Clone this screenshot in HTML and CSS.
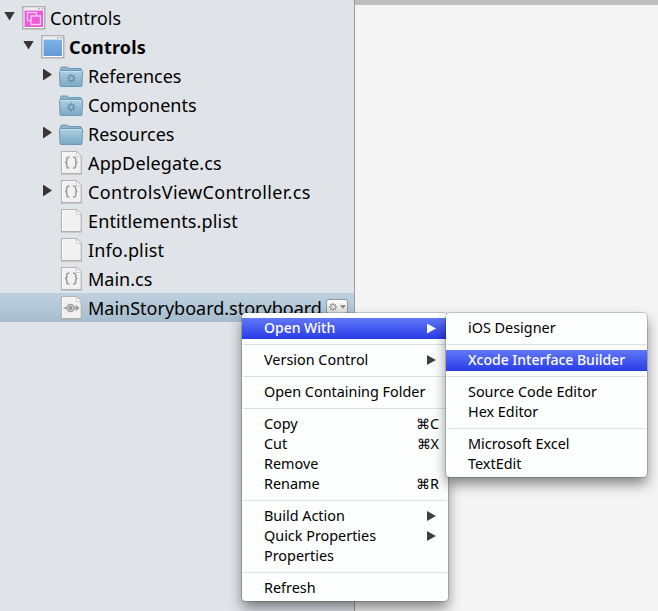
FILE: index.html
```html
<!DOCTYPE html>
<html lang="en">
<head>
<meta charset="utf-8">
<title>Controls</title>
<link rel="stylesheet" href="styles.css">
</head>
<body>
<svg class="defs" width="0" height="0" aria-hidden="true">
  <defs>
    <linearGradient id="folderFill" x1="0" y1="0" x2="0" y2="1"><stop offset="0" stop-color="#afd0e2"/><stop offset="1" stop-color="#7aa9c6"/></linearGradient>
    <linearGradient id="blueFill" x1="0" y1="0" x2="0" y2="1"><stop offset="0" stop-color="#7cb3e8"/><stop offset="1" stop-color="#629bd5"/></linearGradient>
    <symbol id="folder" viewBox="0 0 26 24">
      <path d="M2.5 7V4.5Q2.5 3 4 3H8.500Q10 3 10.300 4.500H22Q23.500 4.500 23.500 6V9H2.500Z" fill="#8cb4cc" stroke="#6d9ab5"/>
      <path d="M1.500 7.500Q1.500 6.500 2.500 6.500H23.500Q24.500 6.500 24.500 7.500L24 21.500Q24 22.500 23 22.500H3Q2 22.500 2 21.500Z" fill="url(#folderFill)" stroke="#6c9ab6"/>
      <path d="M2.500 7.500H23.500" stroke="#c6e1ed"/>
    </symbol>
    <symbol id="gear" viewBox="0 0 12 12">
      <g fill="none" stroke="currentColor"><circle cx="6" cy="6" r="2.800" stroke-width="1.200"/><path d="M6 .8V3M6 9V11.200M.8 6H3M9 6H11.200M2.300 2.300L3.900 3.900M8.100 8.100L9.700 9.700M2.300 9.700L3.900 8.100M8.100 3.900L9.700 2.300" stroke-width="1.200"/></g>
    </symbol>
    <symbol id="page" viewBox="0 0 26 24">
      <path d="M3.500 .700H18.500L23.300 5.500V22.500H3.500Z" fill="#f1f1f1" stroke="#b2b4b6" stroke-width="1.200"/>
      <path d="M4.500 1.700H18M4.500 1.700V21.500" fill="none" stroke="#fff" stroke-width=".8"/>
      <path d="M18.500 .700V5.500H23.300Z" fill="#fff" stroke="#c0c2c4" stroke-width=".8"/>
      <path d="M3 23.200H24" stroke="#a9abad" stroke-width=".7"/>
    </symbol>
    <symbol id="braces" viewBox="0 0 26 24">
      <path d="M11.500 6.300H10.200Q8.800 6.300 8.800 7.700V10Q8.800 11.500 7 11.500Q8.800 11.500 8.800 13V15.500Q8.800 16.900 10.200 16.900H11.500M15 6.300H16.300Q17.700 6.300 17.700 7.700V10Q17.700 11.500 19.500 11.500Q17.700 11.500 17.700 13V15.500Q17.700 16.900 16.300 16.900H15" fill="none" stroke="#9b9b9b" stroke-width="1.500"/>
    </symbol>
    <symbol id="window" viewBox="0 0 24 24">
      <rect x=".8" y=".8" width="22" height="22" fill="#fff" stroke="#afafaf" stroke-width="1.500"/>
      <path d="M2 2.800H22" stroke="#ededed" stroke-width="2.400"/>
      <path d="M16 2.800H18M19.500 2.800H21.500" stroke="#bbb" stroke-width="1.500"/>
    </symbol>
  </defs>
</svg>

<div class="screen">
  <aside class="tree">
    <div class="row level-0"><i class="open"></i>
      <svg class="win" viewBox="0 0 24 24"><use href="#window"/><rect x="2.500" y="4.500" width="18.500" height="16.500" fill="#ef5add"/><g fill="none" stroke="#fbd0f5" stroke-width="1.300"><rect x="5.500" y="6.500" width="9" height="8"/></g><rect x="9" y="10" width="9.500" height="8.500" fill="#ef5add" stroke="#fbd0f5" stroke-width="1.300"/></svg>
      <span>Controls</span></div>
    <div class="row level-1"><i class="open"></i>
      <svg class="win" viewBox="0 0 24 24"><use href="#window"/><rect x="2.500" y="4.500" width="18.500" height="16.500" fill="url(#blueFill)"/></svg>
      <span class="project">Controls</span></div>
    <div class="row level-2"><i class="closed"></i><svg class="icon" viewBox="0 0 26 24"><use href="#folder"/><use href="#gear" x="8" y="9" width="10.500" height="10.500" color="#5d8ba8"/></svg><span>References</span></div>
    <div class="row level-2"><i></i><svg class="icon" viewBox="0 0 26 24"><use href="#folder"/><use href="#gear" x="8" y="9" width="10.500" height="10.500" color="#5d8ba8"/></svg><span>Components</span></div>
    <div class="row level-2"><i class="closed"></i><svg class="icon" viewBox="0 0 26 24"><use href="#folder"/></svg><span>Resources</span></div>
    <div class="row level-2"><i></i><svg class="icon" viewBox="0 0 26 24"><use href="#page"/><use href="#braces"/></svg><span class="source">AppDelegate.cs</span></div>
    <div class="row level-2"><i class="closed"></i><svg class="icon" viewBox="0 0 26 24"><use href="#page"/><use href="#braces"/></svg><span class="controller">ControlsViewController.cs</span></div>
    <div class="row level-2"><i></i><svg class="icon" viewBox="0 0 26 24"><use href="#page"/></svg><span class="source">Entitlements.plist</span></div>
    <div class="row level-2"><i></i><svg class="icon" viewBox="0 0 26 24"><use href="#page"/></svg><span class="source">Info.plist</span></div>
    <div class="row level-2"><i></i><svg class="icon" viewBox="0 0 26 24"><use href="#page"/><use href="#braces"/></svg><span>Main.cs</span></div>
    <div class="row level-2 selected"><i></i><svg class="icon" viewBox="0 0 26 24"><use href="#page"/><path d="M5.500 12H20M17.500 9.500L20.500 12L17.500 14.500" fill="none" stroke="#9b9b9b" stroke-width="1.500"/><circle cx="12.500" cy="12" r="4.200" fill="#9b9b9b"/><circle cx="12.500" cy="12" r="2.700" fill="none" stroke="#e6e6e6" stroke-width=".8"/></svg><span>MainStoryboard.storyboard</span>
      <b class="options"><svg width="10" height="10" color="#888"><use href="#gear"/></svg><svg width="6" height="4"><path d="M0 0H6L3 4Z" fill="#888"/></svg></b></div>
  </aside>
  <main class="editor"></main>
</div>

<nav class="menu context">
  <div class="item active"><span>Open With</span><i></i></div>
  <hr>
  <div class="item"><span>Version Control</span><i></i></div>
  <hr>
  <div class="item"><span>Open Containing Folder</span></div>
  <hr>
  <div class="item"><span>Copy</span><kbd>⌘C</kbd></div>
  <div class="item"><span>Cut</span><kbd>⌘X</kbd></div>
  <div class="item"><span>Remove</span></div>
  <div class="item"><span>Rename</span><kbd>⌘R</kbd></div>
  <hr>
  <div class="item"><span>Build Action</span><i></i></div>
  <div class="item"><span>Quick Properties</span><i></i></div>
  <div class="item"><span>Properties</span></div>
  <hr>
  <div class="item"><span>Refresh</span></div>
</nav>
<nav class="menu submenu">
  <div class="item"><span>iOS Designer</span></div>
  <hr>
  <div class="item active"><span>Xcode Interface Builder</span></div>
  <hr>
  <div class="item"><span>Source Code Editor</span></div>
  <div class="item"><span>Hex Editor</span></div>
  <hr>
  <div class="item"><span>Microsoft Excel</span></div>
  <div class="item"><span>TextEdit</span></div>
</nav>
</body>
</html>
```
FILE: styles.css
```css
* { box-sizing: border-box; }
body { margin: 0; overflow: hidden; font-family: "Noto Sans", "Open Sans", sans-serif; color: #000; }
.defs { position: absolute; }
.screen { display: flex; height: 611px; }
.tree { width: 355px; padding-top: 3px; background: #e0e4e9; border-right: 1px solid #989da3; }
.editor { flex: 1; border-top: 5px solid #bdbdbd; background: #f4f4f4; }
.row { display: flex; align-items: center; height: 29px; font-size: 18px; line-height: 29px; white-space: nowrap; }
.row span { position: relative; top: 1px; }
.row .project { font-weight: 700; letter-spacing: .15px; }
.row .source { letter-spacing: .15px; }
.row .controller { letter-spacing: .33px; }
.level-0 { padding-left: 4px; }
.level-1 { padding-left: 23px; }
.level-2 { padding-left: 42px; }
.row i { width: 16px; height: 14px; flex: none; }
.row i::before { content: ""; display: block; background: #373737; }
.row .open::before { width: 11px; height: 9px; margin-top: 0; clip-path: polygon(0 0, 100% 0, 50% 100%); }
.row .open { height: 12px; }
.row .closed::before { width: 9px; height: 12px; margin-left: 1px; clip-path: polygon(0 0, 100% 50%, 0 100%); }
.win { width: 24px; height: 24px; margin: 0 4px 0 2px; flex: none; }
.icon { width: 26px; height: 24px; margin-right: 4px; flex: none; }
.selected { background: linear-gradient(#bfd1df, #a6bdcd); }
.options { display: flex; align-items: center; justify-content: center; gap: 2px; width: 22px; height: 15px; margin-left: 4px; margin-top: -2px; border: 1px solid #96999c; border-radius: 3px; background: linear-gradient(#fff, #ddd); flex: none; }
.menu { position: absolute; padding: 5px 0 3px; background: #fdfefe; border-radius: 4px; box-shadow: 0 0 0 1px rgba(0,0,0,.16), 0 7px 13px rgba(0,0,0,.46); font-size: 14.4px; }
.context { left: 242px; top: 313px; width: 206px; height: 288px; }
.submenu { left: 446px; top: 313px; width: 201px; height: 164px; }
.item { display: flex; justify-content: space-between; align-items: center; height: 20px; padding: 0 9px 0 22px; line-height: 20px; white-space: nowrap; }
.item span, .item kbd { margin-top: -1px; }
.item.active { height: 21px; margin-bottom: -1px; color: #fff; background: linear-gradient(#6078f7, #293be9); font-size: 14px; font-weight: 500; }
.item.active span { margin-top: -2px; }
.item i { width: 9px; height: 10px; margin-right: 3px; background: #404040; clip-path: polygon(0 0, 100% 50%, 0 100%); }
.item.active i { background: #fff; }
.item kbd { font: inherit; }
.menu hr { height: 1px; margin: 6px 1px 5px; border: 0; background: #dfdfdf; }
```
